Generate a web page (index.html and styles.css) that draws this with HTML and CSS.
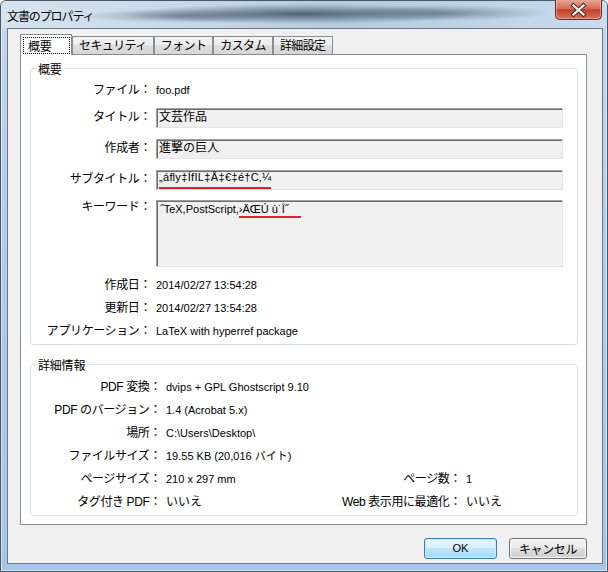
FILE: index.html
```html
<!DOCTYPE html>
<html lang="ja">
<head>
<meta charset="utf-8">
<title>文書のプロパティ</title>
<link rel="stylesheet" href="styles.css">
</head>
<body>
<div class="window">
  <div class="titlebar">
    <div class="title">文書のプロパティ</div>
    <div class="close" aria-label="閉じる">
      <svg width="47" height="20" viewBox="0 0 47 20">
        <defs>
          <linearGradient id="cg" x1="0" y1="0" x2="0" y2="1">
            <stop offset="0" stop-color="#e7a595"/>
            <stop offset="0.45" stop-color="#d66a55"/>
            <stop offset="0.5" stop-color="#c23f2a"/>
            <stop offset="1" stop-color="#d7775a"/>
          </linearGradient>
        </defs>
        <path d="M0.5 0 V15.5 Q0.5 19.5 4.5 19.5 H42.5 Q46.5 19.5 46.5 15.5 V0" fill="url(#cg)" stroke="#6b2a20"/>
        <path d="M1.5 0 V15 Q1.5 18.5 5 18.5 H42 Q45.5 18.5 45.5 15 V0" fill="none" stroke="rgba(255,220,200,0.45)"/>
        <path d="M18.5 5.5 L28.5 14.5 M28.5 5.5 L18.5 14.5" stroke="#4b2a26" stroke-width="4.2" stroke-linecap="square"/>
        <path d="M18.5 5.5 L28.5 14.5 M28.5 5.5 L18.5 14.5" stroke="#ffffff" stroke-width="2.2" stroke-linecap="square"/>
      </svg>
    </div>
  </div>
  <div class="client">
    <div class="tabs">
      <div class="tab active"><span class="focus">概要</span></div>
      <div class="tab">セキュリティ</div>
      <div class="tab">フォント</div>
      <div class="tab">カスタム</div>
      <div class="tab">詳細設定</div>
    </div>
    <div class="panel">
      <fieldset class="group g1">
        <legend>概要</legend>
        <div class="form1">
          <div class="lbl">ファイル：</div>
          <div class="val">foo.pdf</div>

          <div class="lbl">タイトル：</div>
          <div class="input">文芸作品</div>

          <div class="lbl">作成者：</div>
          <div class="input">進撃の巨人</div>

          <div class="lbl">サブタイトル：</div>
          <div class="input lat"><span class="mark mark1">„áﬂy‡ÍfIL‡Å‡€‡é†C‚¼</span></div>

          <div class="lbl top">キーワード：</div>
          <div class="textarea lat">˝TeX,PostScript,<span class="mark mark2">›ÄŒÚ ù˙Î˝</span></div>

          <div class="lbl">作成日：</div>
          <div class="val">2014/02/27 13:54:28</div>

          <div class="lbl">更新日：</div>
          <div class="val">2014/02/27 13:54:28</div>

          <div class="lbl">アプリケーション：</div>
          <div class="val">LaTeX with hyperref package</div>
        </div>
      </fieldset>

      <fieldset class="group g2">
        <legend>詳細情報</legend>
        <div class="form2">
          <div class="lbl">PDF 変換：</div>
          <div class="val span">dvips + GPL Ghostscript 9.10</div>

          <div class="lbl">PDF のバージョン：</div>
          <div class="val span">1.4 (Acrobat 5.x)</div>

          <div class="lbl">場所：</div>
          <div class="val span">C:\Users\Desktop\</div>

          <div class="lbl">ファイルサイズ：</div>
          <div class="val span">19.55 KB (20,016 バイト)</div>

          <div class="lbl">ページサイズ：</div>
          <div class="val">210 x 297 mm</div>
          <div class="lbl">ページ数：</div>
          <div class="val">1</div>

          <div class="lbl">タグ付き PDF：</div>
          <div class="val jp">いいえ</div>
          <div class="lbl">Web 表示用に最適化：</div>
          <div class="val jp">いいえ</div>
        </div>
      </fieldset>
    </div>
    <div class="buttons">
      <div class="btn default">OK</div>
      <div class="btn cancel">キャンセル</div>
    </div>
  </div>
</div>
</body>
</html>
```

FILE: styles.css
```css
* { box-sizing: border-box; }

html, body {
  margin: 0;
  padding: 0;
}

body {
  width: 608px;
  height: 572px;
  overflow: hidden;
  background: #ffffff;
  font-family: "Liberation Sans", "Noto Sans CJK JP", sans-serif;
  font-size: 12px;
  color: #000;
}

.window {
  width: 608px;
  height: 572px;
  border: 1px solid #4a5866;
  border-radius: 6px 6px 0 0;
  background: linear-gradient(to bottom, #c5d9ee 0%, #b2cceb 40%, #a6c6e8 100%);
  box-shadow: inset 0 0 0 1px rgba(255, 255, 255, 0.5);
  display: flex;
  flex-direction: column;
}

/* ---------- title bar ---------- */
.titlebar {
  height: 27px;
  display: flex;
  align-items: flex-start;
  padding: 0 5px 0 6px;
  border-radius: 5px 5px 0 0;
  background:
    radial-gradient(ellipse 180px 10px at 300px 13px, rgba(62, 80, 98, 0.85), rgba(62, 80, 98, 0) 100%),
    radial-gradient(ellipse 110px 8px at 440px 12px, rgba(80, 98, 118, 0.6), rgba(80, 98, 118, 0) 100%),
    radial-gradient(ellipse 100px 7px at 180px 15px, rgba(80, 98, 118, 0.55), rgba(80, 98, 118, 0) 100%),
    linear-gradient(to right, #d6e3ef 0%, #cbdbeb 25%, #b6cbe0 55%, #c2d5e9 85%, #cadcee 100%);
}

.title {
  padding-top: 7px;
  font-family: "Noto Sans CJK JP", sans-serif;
  font-size: 12px;
  line-height: 16px;
  letter-spacing: -1.1px;
  color: #000;
}

.close {
  margin-left: auto;
  margin-top: -1px;
  width: 47px;
  height: 20px;
}

.close svg {
  display: block;
}

/* ---------- client area ---------- */
.client {
  flex: 1;
  margin: 0 4px 7px 6px;
  border: 1px solid #6d7885;
  background: #f0f0f0;
  padding: 5px 15px 4px 12px;
  display: flex;
  flex-direction: column;
}

.tabs {
  height: 20px;
  display: flex;
  align-items: flex-end;
}

.tab {
  height: 18px;
  padding: 0 6px;
  border: 1px solid #898c95;
  border-bottom: none;
  background: linear-gradient(to bottom, #f3f3f3 0%, #ececec 50%, #dfdfdf 50%, #d6d6d6 100%);
  font-family: "Noto Sans CJK JP", sans-serif;
  letter-spacing: -0.6px;
  line-height: 16px;
  white-space: nowrap;
}

.tab.active {
  position: relative;
  z-index: 1;
  width: 52px;
  height: 21px;
  margin-bottom: -1px;
  padding: 2px 1px 0 2px;
  background: #ffffff;
  letter-spacing: -0.2px;
}

.focus {
  display: block;
  width: 47px;
  height: 17px;
  border: 1px dotted #000;
  padding-left: 4px;
  line-height: 15px;
}

.panel {
  height: 471px;
  border: 1px solid #898c95;
  background: #ffffff;
  padding: 6px 8px 8px 9px;
  display: flex;
  flex-direction: column;
  gap: 12px;
}

/* ---------- group boxes ---------- */
.group {
  margin: 0;
  padding: 0 0 1px 0;
  border: 1px solid #d5dfe5;
  border-radius: 3px;
  min-width: 0;
}

.group legend {
  margin-left: 5px;
  padding: 0 2px;
  font-family: "Noto Sans CJK JP", sans-serif;
  font-size: 12px;
  line-height: 15px;
  letter-spacing: -0.2px;
}

.g1 .form1 {
  padding-top: 2px;
  display: grid;
  grid-template-columns: 120px 407px;
  grid-template-rows: 24px 31px 31px 31px 79px 23px 23px 23px;
  column-gap: 5px;
  align-items: center;
}

.g2 .form2 {
  padding-top: 4px;
  display: grid;
  grid-template-columns: 130px 164px 126px 1fr;
  grid-auto-rows: 23px;
  column-gap: 5px;
  align-items: center;
}

.lbl {
  text-align: right;
  white-space: nowrap;
  letter-spacing: -0.4px;
  line-height: 15px;
}

.lbl.top {
  align-self: start;
  margin-top: 5px;
}

.val {
  font-size: 11px;
  line-height: 15px;
  white-space: nowrap;
}

.val.jp {
  font-size: 12px;
}

.val.span {
  grid-column: 2 / -1;
}

.input {
  height: 20px;
  background: #f0f0f0;
  border: 1px solid;
  border-color: #a0a0a0 #e3e3e3 #e3e3e3 #a0a0a0;
  box-shadow: inset 1px 1px 0 #6d6d6d;
  padding-left: 2px;
  display: flex;
  align-items: center;
  line-height: 15px;
  white-space: nowrap;
}

.textarea {
  align-self: start;
  margin-top: 5px;
  height: 67px;
  background: #f0f0f0;
  border: 1px solid;
  border-color: #a0a0a0 #e3e3e3 #e3e3e3 #a0a0a0;
  box-shadow: inset 1px 1px 0 #6d6d6d;
  padding: 1px 3px;
  line-height: 14px;
  white-space: nowrap;
}

.lat {
  font-size: 11px;
}

.mark {
  border-bottom: 2px solid #e2222b;
}

.mark1 {
  padding-bottom: 2px;
  letter-spacing: 0.35px;
}

.mark2 {
  padding-bottom: 1px;
  padding-right: 13px;
}

/* ---------- buttons ---------- */
.buttons {
  margin-top: 13px;
  height: 21px;
  display: flex;
  justify-content: flex-end;
  gap: 12px;
}

.btn {
  height: 21px;
  border: 1px solid #707070;
  border-radius: 3px;
  display: flex;
  align-items: center;
  justify-content: center;
  line-height: 15px;
}

.btn.default {
  width: 73px;
  border-color: #3c7fb1;
  background: linear-gradient(to bottom, #eaf6fd 0%, #d9f0fc 50%, #bee6fd 50%, #a7d9f5 100%);
  box-shadow: inset 0 0 0 1px #c4ecfd;
  font-size: 11px;
}

.btn.cancel {
  width: 78px;
  background: linear-gradient(to bottom, #f2f2f2 0%, #ebebeb 50%, #dddddd 50%, #cfcfcf 100%);
  box-shadow: inset 0 0 0 1px #fbfbfb;
  font-family: "Noto Sans CJK JP", sans-serif;
  letter-spacing: -0.4px;
}
```
